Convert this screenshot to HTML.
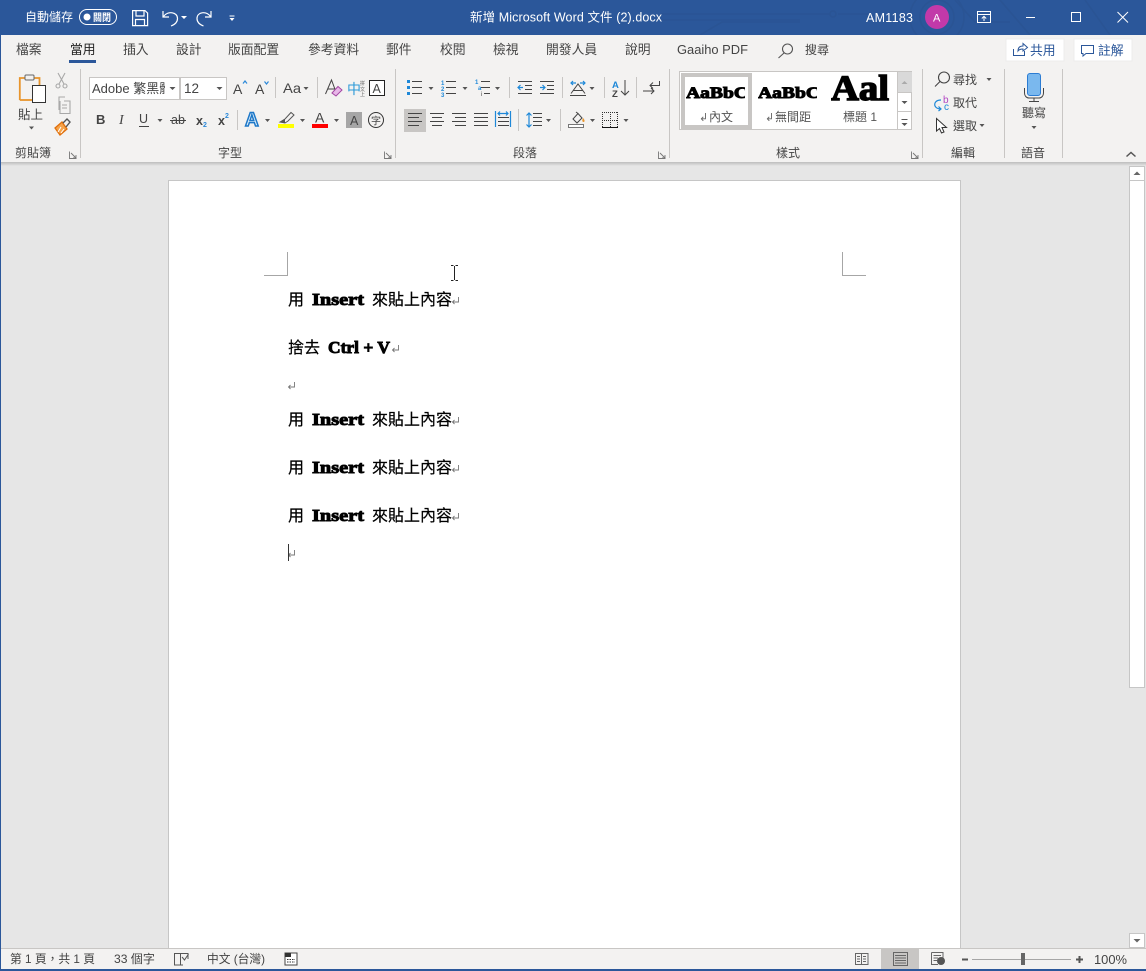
<!DOCTYPE html>
<html lang="zh-Hant"><head><meta charset="utf-8"><title>Word</title>
<style>
html,body{margin:0;padding:0;width:1146px;height:971px;overflow:hidden;background:#e6e6e6}
svg{display:block;position:absolute;left:0;top:0}
text{font-family:"Liberation Sans","Noto Sans CJK TC",sans-serif;font-size:12px;fill:#444;white-space:pre}
.w{fill:#fff}
.s11{font-size:11px}
.tb{font-size:12.800px}
.d{fill:#000;stroke:#000;stroke-width:.2px;font-size:16px;font-family:"Liberation Sans","Noto Sans CJK TC",sans-serif}
.h{fill:#000;stroke:#000;stroke-width:.9px;font-family:"Liberation Serif",serif;font-weight:bold;font-size:17px}
.ln{stroke:#444;stroke-width:1;fill:none}
.b{stroke:#1e88d8;stroke-width:1.200;fill:none}
.sep{stroke:#c8c6c4;stroke-width:1}
.ar{fill:#555}
.pm{stroke:#777;stroke-width:.9;fill:none}
</style></head><body>
<svg width="1146" height="971" viewBox="0 0 1146 971" xmlns="http://www.w3.org/2000/svg" shape-rendering="geometricPrecision">
<defs>
<linearGradient id="sh" x1="0" y1="0" x2="0" y2="1"><stop offset="0" stop-color="#bdbdbd"/><stop offset="1" stop-color="#e6e6e6"/></linearGradient>
<clipPath id="tbc"><rect x="0" y="0" width="1146" height="35"/></clipPath>
<clipPath id="fc"><rect x="90" y="78" width="75" height="20"/></clipPath>
<clipPath id="s1"><rect x="686" y="80" width="59" height="26"/></clipPath>
<clipPath id="s2"><rect x="758" y="80" width="59" height="26"/></clipPath>
<clipPath id="s3"><rect x="831" y="74" width="59" height="32"/></clipPath>
</defs>

<!-- backgrounds -->
<rect width="1146" height="971" fill="#e6e6e6"/>
<rect width="1146" height="35" fill="#2b579a"/>
<rect x="1" y="35" width="1145" height="127" fill="#f3f2f1"/>
<rect x="1" y="162" width="1145" height="4" fill="url(#sh)"/>
<rect x="0" y="0" width="1" height="971" fill="#2b579a"/>

<!-- title bar circuit decoration -->
<g fill="none" stroke="#2a5494" stroke-width="1.500" clip-path="url(#tbc)">
<path d="M660 14H830M838 14H870M660 20H800M700 35L722 22H800"/>
<circle cx="833" cy="14" r="3"/>
<circle cx="937" cy="17" r="17"/><circle cx="937" cy="17" r="27"/>
<path d="M1000 0L1030 35M1085 0L1110 35M955 0L975 22H1010"/>
</g>

<!-- title bar -->
<text x="25" y="21" class="w">自動儲存</text>
<rect x="79.500" y="9.500" width="37" height="15" rx="7.500" fill="none" stroke="#fff"/>
<circle cx="87" cy="17" r="3.500" fill="#fff"/>
<text x="93" y="21" class="w" style="font-size:10px;font-weight:bold" textLength="18" lengthAdjust="spacingAndGlyphs">關閉</text>
<g fill="none" stroke="#fff" stroke-width="1.200">
<path d="M132.600 10.600H145L147.600 13V25.600H132.600ZM136 10.600V16H144V10.600M135.500 25.600V19.500H144.500V25.600"/>
<path d="M163 11V17H169M163.500 16.500C168 10.500 177.500 12 177.500 18.500C177.500 22 175 24.500 171 26"/>
<path d="M211 11V17H205M210.500 16.500C206 10.500 197 12 197 18.500C197 22 199.500 24.500 203.500 26"/>
</g>
<path d="M181 16h6l-3 3zM229.500 18h5l-2.500 3z" fill="#fff"/>
<rect x="229.500" y="15.500" width="5" height="1" fill="#fff"/>
<text x="470" y="21.500" class="w" style="font-size:12.500px" textLength="192" lengthAdjust="spacing">新增 Microsoft Word 文件 (2).docx</text>
<text x="866" y="22" class="w" style="font-size:12.500px" textLength="47">AM1183</text>
<circle cx="937" cy="17" r="12" fill="#c239a9"/>
<text x="933" y="21.500" class="w" style="font-size:11px">A</text>
<g fill="none" stroke="#fff" stroke-width="1">
<path d="M977.500 11.500H990.500V22.500H977.500ZM977.500 14.500H990.500M984 21V16.500M981.800 18.500L984 16.300L986.200 18.500"/>
<path d="M1026 17.500H1035"/>
<rect x="1071.500" y="12.500" width="9" height="9"/>
<path d="M1117.500 12L1128 22.500M1128 12L1117.500 22.500"/>
</g>

<!-- tabs -->
<g>
<text x="16" y="54" class="tb">檔案</text>
<text x="70" y="54" class="tb" style="fill:#222">當用</text>
<text x="123" y="54" class="tb">插入</text>
<text x="176" y="54" class="tb">設計</text>
<text x="228" y="54" class="tb">版面配置</text>
<text x="308" y="54" class="tb">參考資料</text>
<text x="386" y="54" class="tb">郵件</text>
<text x="440" y="54" class="tb">校閱</text>
<text x="493" y="54" class="tb">檢視</text>
<text x="546" y="54" class="tb">開發人員</text>
<text x="625" y="54" class="tb">說明</text>
<text x="677" y="54" style="font-size:13px" textLength="71" lengthAdjust="spacingAndGlyphs">Gaaiho PDF</text>
<text x="805" y="54">搜尋</text>
</g>
<rect x="69" y="60" width="27" height="3" fill="#2b579a"/>
<g fill="none" stroke="#555" stroke-width="1.100"><circle cx="787.500" cy="49" r="5"/><path d="M784 53L778.500 58"/></g>
<rect x="1006" y="39" width="58" height="22" fill="#fff" stroke="#ececec"/>
<rect x="1074" y="39" width="58" height="22" fill="#fff" stroke="#ececec"/>
<g fill="none" stroke="#2b579a" stroke-width="1">
<path d="M1013.500 49V55.500H1024.500V51M1018 51C1018 47.500 1020 46 1023 46V43.500L1027.500 47.500L1023 51V49C1021 49 1019 49.500 1018 51Z"/>
<path d="M1081.500 45.500H1093.500V53.500H1086L1083 56V53.500H1081.500Z"/>
</g>
<text x="1030" y="55" class="tb" style="fill:#2b579a">共用</text>
<text x="1098" y="55" class="tb" style="fill:#2b579a">註解</text>

<!-- group separators -->
<g class="sep">
<path d="M80.500 69V158M395.500 69V158M669.500 69V158M922.500 69V158M1004.500 69V158M1062.500 69V158"/>
<path d="M275.500 77V98M317.500 77V98M237.500 110V130M509.500 77V98M562.500 77V98M604.500 77V98M636.500 77V98M518.500 109V131M560.500 109V131"/>
</g>
<!-- group labels -->
<text x="15" y="157">剪貼簿</text>
<text x="218" y="157">字型</text>
<text x="513" y="157">段落</text>
<text x="776" y="157">樣式</text>
<text x="951" y="157">編輯</text>
<text x="1021" y="157">語音</text>
<g fill="none" stroke="#777" stroke-width=".9">
<path d="M69.500 151.500V158.500H76.500M71 153L76 158M73 158H76V155"/>
<path d="M384.500 151.500V158.500H391.500M386 153L391 158M388 158H391V155"/>
<path d="M658.500 151.500V158.500H665.500M660 153L665 158M662 158H665V155"/>
<path d="M911.500 151.500V158.500H918.500M913 153L918 158M915 158H918V155"/>
</g>
<path d="M1126.500 156.500L1131 152.500L1135.500 156.500" fill="none" stroke="#555" stroke-width="1.500"/>

<!-- clipboard -->
<path d="M19.800 100V78H25M34 78H39.500V85" fill="none" stroke="#e8952c" stroke-width="1.800"/>
<path d="M19.800 100H32" stroke="#e8952c" stroke-width="1.800"/>
<rect x="25" y="75" width="9" height="5" rx="1" fill="#f3f2f1" stroke="#666"/>
<rect x="32.500" y="85.500" width="13" height="17" fill="#fff" stroke="#333"/>
<text x="18" y="119" style="font-size:12.500px">貼上</text>
<path class="ar" d="M29 126.500h5l-2.500 3z"/>
<g fill="none" stroke="#a8a8a8" stroke-width="1.100">
<path d="M58 73L64 84M65 73L59 84"/><circle cx="58" cy="86" r="2"/><circle cx="65" cy="86" r="2"/>
<path d="M59 110V97H65M64 101H70V113.500H60V101"/><path d="M62 105H67M62 108H67"/>
</g>
<path d="M55 128L62 122L67 129L60 135Z" fill="#f6a34a" stroke="#e06f0b" stroke-width="1.300"/>
<path d="M58 132L61 127M61 133L64 129" stroke="#fff" stroke-width="1"/>
<path d="M63 123L67 119L70 122L66 127" fill="none" stroke="#555" stroke-width="1.400"/>

<!-- font row 1 -->
<rect x="89.500" y="77.500" width="90" height="22" fill="#fff" stroke="#c8c6c4"/>
<rect x="180.500" y="77.500" width="46" height="22" fill="#fff" stroke="#c8c6c4"/>
<text x="92" y="93" clip-path="url(#fc)" style="font-size:13px">Adobe 繁黑體</text>
<text x="184" y="93" style="font-size:13.500px">12</text>
<path class="ar" d="M169.500 87h6l-3 3zM216.500 87h6l-3 3z"/>
<text x="233" y="94" style="font-size:14px">A</text>
<path d="M243 83.500L245 81L247 83.500" fill="none" stroke="#2b88d8" stroke-width="1.200"/>
<text x="255" y="94" style="font-size:14px">A</text>
<path d="M264.500 81.500L266.500 84L268.500 81.500" fill="none" stroke="#2b88d8" stroke-width="1.200"/>
<text x="283" y="93" style="font-size:14px" textLength="18" lengthAdjust="spacingAndGlyphs">Aa</text>
<path class="ar" d="M303.500 87h5l-2.500 3z"/>
<path d="M325.500 94L331.500 80L336 92M328 89H335" fill="none" stroke="#444" stroke-width="1"/>
<path d="M332 93L338 86.500L342 90L336 96Z" fill="#e8b7e8" stroke="#a347a3"/>
<text x="347" y="94" style="font-size:14px;fill:#2b9ad8">中</text>
<text x="360" y="85" style="font-size:5px;fill:#666">拼</text>
<text x="360" y="91" style="font-size:5px;fill:#666">文</text>
<text x="360" y="96" style="font-size:5px;fill:#666">上</text>
<rect x="369.500" y="80.500" width="15" height="15" fill="#fff" stroke="#222"/>
<text x="372.500" y="93" style="font-size:12.500px">A</text>

<!-- font row 2 -->
<text x="96" y="124" style="font-size:13px;font-weight:bold">B</text>
<text x="119" y="124" style="font-family:'Liberation Serif',serif;font-style:italic;font-size:14px">I</text>
<text x="139" y="123" style="font-size:12.500px">U</text>
<path d="M139 126.500H149" stroke="#444"/>
<path class="ar" d="M157.500 119h5l-2.500 3z"/>
<text x="171" y="124" style="font-size:12.500px">ab</text>
<path d="M170 120.500H186" stroke="#444"/>
<text x="196" y="125" style="font-size:12.500px;font-weight:bold">x</text>
<text x="203" y="127" style="font-size:7px;fill:#2b88d8;font-weight:bold">2</text>
<text x="218" y="125" style="font-size:12.500px;font-weight:bold">x</text>
<text x="225" y="118" style="font-size:7px;fill:#2b88d8;font-weight:bold">2</text>
<text x="245" y="126" style="font-size:19px;font-weight:bold;fill:#dff0fc;stroke:#1e78c8;stroke-width:1.500px">A</text>
<path class="ar" d="M265 119h5l-2.500 3zM300 119h5l-2.500 3zM334 119h5l-2.500 3z"/>
<path d="M280 122L285 119L291 112.500L294 115L288 121L285 123Z" fill="#f3f2f1" stroke="#555"/>
<path d="M280 122L285 119L285 123Z" fill="#555"/>
<rect x="278" y="124" width="16" height="4" fill="#ffff00"/>
<text x="315" y="122.500" style="font-size:14px">A</text>
<rect x="312" y="124" width="16" height="4" fill="#f00"/>
<rect x="346" y="112" width="16" height="16" fill="#a6a6a6"/>
<text x="350" y="125" style="font-size:12.500px">A</text>
<circle cx="376" cy="120" r="7.500" fill="none" stroke="#333"/>
<text x="371" y="124.500" style="font-size:10px">字</text>

<!-- paragraph row 1 -->
<g fill="#1e88d8">
<rect x="407" y="80" width="3" height="3"/><rect x="407" y="86" width="3" height="3"/><rect x="407" y="92" width="3" height="3"/>
</g>
<path class="ln" d="M412 81.500H422M412 87.500H422M412 93.500H422M446 81.500H456M446 87.500H456M446 93.500H456M481 81.500H490M481 87.500H490M484 93.500H490"/>
<text x="441" y="85" style="font-size:6px;fill:#1e88d8;font-weight:bold">1</text>
<text x="441" y="91" style="font-size:6px;fill:#1e88d8;font-weight:bold">2</text>
<text x="441" y="97" style="font-size:6px;fill:#1e88d8;font-weight:bold">3</text>
<text x="475" y="84" style="font-size:6px;fill:#1e88d8;font-weight:bold">1</text>
<text x="478" y="90" style="font-size:6px;fill:#1e88d8;font-weight:bold">a</text>
<text x="481" y="96" style="font-size:6px;fill:#444">i</text>
<path class="ar" d="M428.500 87h5l-2.500 3zM462.500 87h5l-2.500 3zM495 87h5l-2.500 3zM589.500 87h5l-2.500 3z"/>
<path class="ln" d="M518 81.500H532M525 85.500H532M525 89.500H532M518 93.500H532M540 81.500H554M547 85.500H554M547 89.500H554M540 93.500H554"/>
<path class="b" d="M523 87.500H518M520.500 85L518 87.500L520.500 90M540 87.500H545M542.500 85L545 87.500L542.500 90"/>
<path class="b" d="M571 83H576M573 81L571 83L573 85M585 83H580M583 81L585 83L583 85"/>
<path class="ln" stroke-width="1.200" d="M571 93.500L578 84L585 93.500M573.500 90.500H582.500M570 95.500H586"/>
<text x="612" y="88" style="font-size:9.500px;font-weight:bold;fill:#1e88d8">A</text>
<text x="612" y="97" style="font-size:9.500px;font-weight:bold;fill:#444">Z</text>
<path class="ln" d="M625 80V95M621 91L625 95L629 91"/>
<path class="ln" d="M643 91H654M651 88L654 91L651 94M659.500 81V85.500H650M653 82.500L650 85.500L653 88.500"/>

<!-- paragraph row 2 -->
<rect x="404" y="109" width="22" height="23" fill="#c8c6c4"/>
<path class="ln" d="M408 113.500H422M408 117.500H419M408 121.500H422M408 125.500H419"/>
<path class="ln" d="M430 113.500H444M432 117.500H442M430 121.500H444M432 125.500H442"/>
<path class="ln" d="M452 113.500H466M455 117.500H466M452 121.500H466M455 125.500H466"/>
<path class="ln" d="M474 113.500H488M474 117.500H488M474 121.500H488M474 125.500H488"/>
<path class="ln" d="M498 117.500H509M498 121.500H509M498 125.500H509"/>
<path class="b" d="M495.500 111V127M510.500 111V127M498 113.500H508M500 111.500L498 113.500L500 115.500M506 111.500L508 113.500L506 115.500"/>
<path class="ln" d="M533 113.500H542M533 117.500H542M533 121.500H542M533 125.500H542"/>
<path class="b" d="M529 113V127M526.500 115.500L529 113L531.500 115.500M526.500 124.500L529 127L531.500 124.500"/>
<path class="ar" d="M546 119h5l-2.500 3zM590 119h5l-2.500 3zM623.500 119h5l-2.500 3z"/>
<path d="M573 119L578 113.500L582 118L577 123Z" fill="none" stroke="#444"/>
<path d="M576 112L578 113.500" stroke="#444"/>
<path d="M583 118C585 120 585 122 583.500 122C582 122 582 120 583 118Z" fill="#e8952c"/>
<rect x="568.500" y="124.500" width="15" height="3" fill="#fff" stroke="#777"/>
<g shape-rendering="crispEdges">
<path d="M602.500 112V127M610.500 112V127M617.500 112V127M602 112.500H618M602 120.500H618" fill="none" stroke="#333" stroke-dasharray="1 1"/>
<path d="M602 127.500H618" stroke="#111"/>
</g>

<!-- style gallery -->
<rect x="679.500" y="71.500" width="232" height="58" fill="#fff" stroke="#c8c6c4"/>
<rect x="683" y="75" width="67" height="52" fill="#fff" stroke="#c8c6c4" stroke-width="4"/>
<text x="686" y="98" class="h" clip-path="url(#s1)" style="font-size:16px;stroke-width:1px" textLength="62" lengthAdjust="spacingAndGlyphs">AaBbC</text>
<text x="699" y="121" class="s11" style="fill:#666">↲</text>
<text x="709" y="121" style="fill:#555">內文</text>
<text x="758" y="98" class="h" clip-path="url(#s2)" style="font-size:16px;stroke-width:1px" textLength="62" lengthAdjust="spacingAndGlyphs">AaBbC</text>
<text x="765" y="121" class="s11" style="fill:#666">↲</text>
<text x="775" y="121" style="fill:#555">無間距</text>
<text x="831" y="100" class="h" clip-path="url(#s3)" style="font-size:36px;stroke-width:1.500px" textLength="58" lengthAdjust="spacingAndGlyphs">Aal</text>
<text x="843" y="121" style="fill:#555">標題 1</text>
<rect x="897" y="72" width="15" height="20" fill="#d9d9d9"/>
<path d="M897.500 71.500V130M897 92.500H912M897 111.500H912" stroke="#c8c6c4" fill="none"/>
<path d="M901.500 84h6l-3-3z" fill="#aaa"/>
<path class="ar" d="M901.500 101h6l-3 3z"/>
<path d="M901.500 123h6l-3 3z" fill="#555"/>
<path d="M901.500 119.500H907.500" stroke="#555"/>

<!-- editing -->
<g fill="none" stroke="#444" stroke-width="1.100"><circle cx="944" cy="77.500" r="5.500"/><path d="M940 81.500L935 86.500"/></g>
<text x="953" y="84">尋找</text>
<path class="ar" d="M986.500 78h5l-2.500 3zM979.500 124h5l-2.500 3z"/>
<text x="943" y="103" style="font-size:10px;fill:#b146c2">b</text>
<text x="944" y="110" style="font-size:10px;fill:#1e88d8">c</text>
<path class="b" d="M941 100C936 100 934 103 935 106C936 108 938 109 941 109M938.500 106.500L941 109L938.500 111"/>
<text x="953" y="107">取代</text>
<path d="M936.500 118.500V131L939.500 128.500L941.500 133L944 132L942 127.500H946.500Z" fill="#fff" stroke="#333"/>
<text x="953" y="130">選取</text>

<!-- dictate -->
<rect x="1027.500" y="73.500" width="13" height="22" rx="2.500" fill="#7ab8ee" stroke="#2b7cd3"/>
<path d="M1024.500 88V93C1024.500 96 1026.500 98 1029 98H1039C1041.500 98 1043.500 96 1043.500 93V88M1034 98V101M1029 101.500H1039" fill="none" stroke="#444"/>
<text x="1022" y="117">聽寫</text>
<path class="ar" d="M1031.500 126h5l-2.500 3z"/>

<!-- page -->
<rect x="168.500" y="180.500" width="792" height="780" fill="#fff" stroke="#c6c6c6"/>
<rect x="168" y="948" width="800" height="23" fill="#f3f2f1"/>
<path d="M287.500 252V275.500H264M842.500 252V275.500H866" fill="none" stroke="#a6a6a6"/>

<!-- document text -->
<g>
<text x="288" y="305" class="d">用</text>
<text x="312" y="305" class="h" textLength="52" lengthAdjust="spacingAndGlyphs">Insert</text>
<text x="372" y="305" class="d">來貼上內容</text>
<text x="288" y="353" class="d">捨去</text>
<text x="328" y="353" class="h" textLength="62" lengthAdjust="spacingAndGlyphs">Ctrl + V</text>
<text x="288" y="425" class="d">用</text>
<text x="312" y="425" class="h" textLength="52" lengthAdjust="spacingAndGlyphs">Insert</text>
<text x="372" y="425" class="d">來貼上內容</text>
<text x="288" y="473" class="d">用</text>
<text x="312" y="473" class="h" textLength="52" lengthAdjust="spacingAndGlyphs">Insert</text>
<text x="372" y="473" class="d">來貼上內容</text>
<text x="288" y="521" class="d">用</text>
<text x="312" y="521" class="h" textLength="52" lengthAdjust="spacingAndGlyphs">Insert</text>
<text x="372" y="521" class="d">來貼上內容</text>
</g>
<!-- paragraph marks -->
<g class="pm">
<path d="M458.500 297V302H452.500M454.500 300L452.500 302L454.500 304"/>
<path d="M398.500 345V350H392.500M394.500 348L392.500 350L394.500 352"/>
<path d="M294.500 382V387H288.500M290.500 385L288.500 387L290.500 389"/>
<path d="M458.500 417V422H452.500M454.500 420L452.500 422L454.500 424"/>
<path d="M458.500 465V470H452.500M454.500 468L452.500 470L454.500 472"/>
<path d="M458.500 513V518H452.500M454.500 516L452.500 518L454.500 520"/>
<path d="M294.500 550V555H288.500M290.500 553L288.500 555L290.500 557"/>
</g>
<path d="M288.500 544V561" stroke="#333"/>
<path d="M451 265.500H453.500M455.500 265.500H458M454.500 266V280M451 280.500H453.500M455.500 280.500H458" fill="none" stroke="#222"/>

<!-- scrollbar -->
<rect x="1129" y="166" width="17" height="782" fill="#e6e6e6"/>
<rect x="1129.500" y="166.500" width="15" height="14" fill="#fff" stroke="#c6c6c6"/>
<rect x="1129.500" y="180.500" width="15" height="507" fill="#fff" stroke="#c6c6c6"/>
<rect x="1129.500" y="933.500" width="15" height="14" fill="#fff" stroke="#c6c6c6"/>
<path d="M1133.500 175h7l-3.500-3.500z" fill="#666"/>
<path d="M1133.500 939h7l-3.500 3.500z" fill="#666"/>

<!-- status bar -->
<rect x="1" y="948" width="1145" height="21" fill="#f3f2f1"/>
<path d="M1 948.500H1146" stroke="#c8c6c4"/>
<rect x="0" y="969" width="1146" height="2" fill="#2b579a"/>
<rect x="881" y="949" width="38" height="20" fill="#c8c6c4"/>
<text x="10" y="963" style="font-size:12px" textLength="85" lengthAdjust="spacingAndGlyphs">第 1 頁，共 1 頁</text>
<text x="114" y="963" style="font-size:12px" textLength="41" lengthAdjust="spacingAndGlyphs">33 個字</text>
<text x="207" y="963" style="font-size:12px" textLength="58" lengthAdjust="spacingAndGlyphs">中文 (台灣)</text>
<path d="M174.500 953.500H180.500V965H174.500ZM180.500 953.500H188V959M180.500 965H183" fill="none" stroke="#555"/>
<path d="M182 957L184.500 960L188.500 954" fill="none" stroke="#555"/>
<rect x="285" y="953" width="12" height="12" fill="#fff" stroke="#444"/>
<rect x="285" y="953" width="6" height="4" fill="#333"/>
<path d="M287 959.500H295M287 962H295" stroke="#333" stroke-dasharray="1.500 1"/>
<g fill="none" stroke="#666">
<path d="M855.500 953.500H861.500V964.500H855.500ZM861.500 953.500H868V964.500H861.500M857 956.500H860M857 959H860M857 961.500H860M863 956.500H866M863 959H866M863 961.500H866"/>
<rect x="893.500" y="952.500" width="14" height="13"/>
<path d="M895 955.500H906M895 958H906M895 960.500H906M895 963H906"/>
<path d="M931.500 952.500H943V958M931.500 952.500V964.500H938M933.500 955.500H941M933.500 958H938M933.500 960.500H937"/>
</g>
<circle cx="941" cy="961" r="4" fill="#555"/>
<path d="M962 959.500H968" stroke="#555" stroke-width="2"/>
<path d="M972 959.500H1071" stroke="#a6a6a6"/>
<rect x="1021" y="953" width="4" height="12" fill="#666"/>
<path d="M1076 959.500H1083M1079.500 956V963" stroke="#555" stroke-width="2"/>
<text x="1094" y="964" style="font-size:13px" textLength="33" lengthAdjust="spacingAndGlyphs">100%</text>
</svg>
</body></html>
